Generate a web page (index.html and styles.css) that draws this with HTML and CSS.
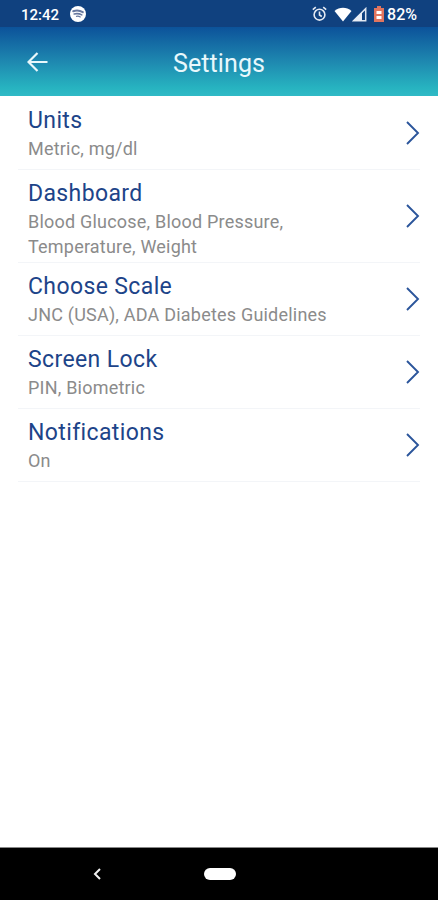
FILE: index.html
```html
<!DOCTYPE html>
<html lang="en">

<head>
    <meta charset="UTF-8">
    <meta name="viewport" content="width=device-width, initial-scale=1.0">
    <title>Settings</title>
    <link rel="stylesheet" href="styles.css">
</head>

<body>
    <div class="screen">
        <!-- Status bar -->
        <div class="status-bar">
            <span class="time">12:42</span>
            <svg class="music" width="16" height="16" viewBox="0 0 16 16">
                <circle cx="8" cy="8" r="8" fill="#fff" />
                <g fill="none" stroke="#68799f" stroke-linecap="round">
                    <path d="M3.2 5.200c3-1 6.800-.7 9.600 1" stroke-width="2" />
                    <path d="M4.200 8c2.500-.7 5.400-.3 7.600.9" stroke-width="1.600" />
                    <path d="M6.500 10.300c1.500-.3 2.800 0 3.800.6" stroke-width="1.200" />
                </g>
            </svg>
            <div class="status-icons">
                <svg class="alarm" width="15" height="16" viewBox="0 0 15 16">
                    <g fill="none" stroke="#e4eaf3" stroke-width="1.600">
                        <circle cx="7.500" cy="8.700" r="5.400" />
                        <path d="M.8 3.700l3-2.500M14.200 3.700l-3-2.500M7.500 5.500v3.500l2.300 1.500" />
                    </g>
                </svg>
                <svg class="wifi" width="18" height="15" viewBox="0 0 18 15">
                    <path d="M.5 4C5.500-.3 12.500-.3 17.500 4L9 14.500z" fill="#fff" />
                </svg>
                <svg class="signal" width="15" height="15" viewBox="0 0 15 15">
                    <path d="M1.500 13.800L13.700 1.600v12.200z" fill="none" stroke="#dfe6f0" stroke-width="1.500" />
                    <path d="M1 14L10 5v9z" fill="#e8edf5" />
                </svg>
                <svg class="battery" width="10" height="16" viewBox="0 0 10 16">
                    <path d="M3 0h4v2h3v14H0V2h3z" fill="#e0755f" />
                    <path d="M2.500 5h5v3h-5zM2.500 10h5v3h-5z" fill="#fff" />
                </svg>
                <span>82%</span>
            </div>
        </div>

        <!-- Header -->
        <header class="header">
            <svg class="back" width="21" height="20" viewBox="0 0 21 20">
                <path d="M20.500 10H2M10.500 1L1.500 10l9 9" fill="none" stroke="#e9f7fb" stroke-width="2.200" />
            </svg>
            <h1>Settings</h1>
        </header>

        <!-- Settings list -->
        <main class="list">
            <div class="item">
                <div class="item-text">
                    <h2>Units</h2>
                    <p>Metric, mg/dl</p>
                </div>
                <svg class="arrow" viewBox="0 0 14 24">
                    <path d="M1 1l11 11L1 23" />
                </svg>
            </div>
            <div class="item item-tall">
                <div class="item-text">
                    <h2>Dashboard</h2>
                    <p>Blood Glucose, Blood Pressure,<br>Temperature, Weight</p>
                </div>
                <svg class="arrow" viewBox="0 0 14 24">
                    <path d="M1 1l11 11L1 23" />
                </svg>
            </div>
            <div class="item">
                <div class="item-text">
                    <h2>Choose Scale</h2>
                    <p>JNC (USA), ADA Diabetes Guidelines</p>
                </div>
                <svg class="arrow" viewBox="0 0 14 24">
                    <path d="M1 1l11 11L1 23" />
                </svg>
            </div>
            <div class="item">
                <div class="item-text">
                    <h2>Screen Lock</h2>
                    <p>PIN, Biometric</p>
                </div>
                <svg class="arrow" viewBox="0 0 14 24">
                    <path d="M1 1l11 11L1 23" />
                </svg>
            </div>
            <div class="item">
                <div class="item-text">
                    <h2>Notifications</h2>
                    <p>On</p>
                </div>
                <svg class="arrow" viewBox="0 0 14 24">
                    <path d="M1 1l11 11L1 23" />
                </svg>
            </div>
        </main>

        <!-- Navigation bar -->
        <nav class="nav-bar">
            <svg width="8" height="12" viewBox="0 0 8 12">
                <path d="M7 1L2 6l5 5" fill="none" stroke="#f0f0f0" stroke-width="2" />
            </svg>
            <span class="home"></span>
        </nav>
    </div>
</body>

</html>
```

FILE: styles.css
```css
body {
    font-family: Roboto, "Liberation Sans", sans-serif;
    background-color: #ffffff;
    margin: 0;
}

h1,
h2,
p {
    margin: 0;
    font-weight: 400;
}

svg {
    display: block;
    flex-shrink: 0;
}

.screen {
    display: flex;
    flex-direction: column;
    height: 900px;
    overflow: hidden;
}

.status-bar {
    display: flex;
    align-items: center;
    box-sizing: border-box;
    height: 27px;
    padding: 1px 21px 0 21px;
    background-color: #10417f;
    color: #ffffff;
    font-size: 15px;
    font-weight: 500;
    line-height: 25px;
}

.status-bar .time {
    padding-top: 2px;
}

.music {
    margin-left: 11px;
}

.status-icons {
    display: flex;
    align-items: center;
    margin-left: auto;
}

.status-icons span {
    font-size: 16px;
}

.wifi {
    margin-left: 7px;
}

.battery {
    margin: 0 3px 0 7px;
}

.header {
    display: grid;
    grid-template-columns: 48px 1fr 48px;
    align-items: center;
    height: 69px;
    background: linear-gradient(#0c529a, #1e88b0 50%, #27b3c0 88%, #30bac6);
}

.back {
    margin-left: 27px;
}

.header h1 {
    padding-top: 5px;
    color: #e9f8fc;
    font-size: 25px;
    line-height: 30px;
    letter-spacing: 0.1px;
    text-align: center;
}

.list {
    flex: 1;
    padding: 1px 18px 0;
}

.item {
    display: flex;
    align-items: center;
    justify-content: space-between;
    box-sizing: border-box;
    height: 73px;
    padding: 0 0 0 10px;
    border-bottom: 1px solid #f3f5f8;
}

.item-tall {
    height: 93px;
}

.item-text {
    align-self: flex-start;
    padding-top: 10px;
}

.item h2 {
    margin-bottom: 1px;
    color: #1d4489;
    font-size: 23px;
    line-height: 28px;
    letter-spacing: 0.38px;
}

.item p {
    color: #8b8b8b;
    font-size: 18px;
    line-height: 25px;
    letter-spacing: 0.21px;
}

.arrow {
    width: 14px;
    height: 24px;
    fill: none;
    stroke: #2b559b;
    stroke-width: 1.9;
}

.nav-bar {
    display: flex;
    align-items: center;
    box-sizing: border-box;
    height: 53px;
    padding-left: 93px;
    border-top: 1px solid #888888;
    background-color: #000000;
}

.home {
    width: 32px;
    height: 12px;
    margin-left: 103px;
    border-radius: 6px;
    background-color: #ffffff;
}
```
